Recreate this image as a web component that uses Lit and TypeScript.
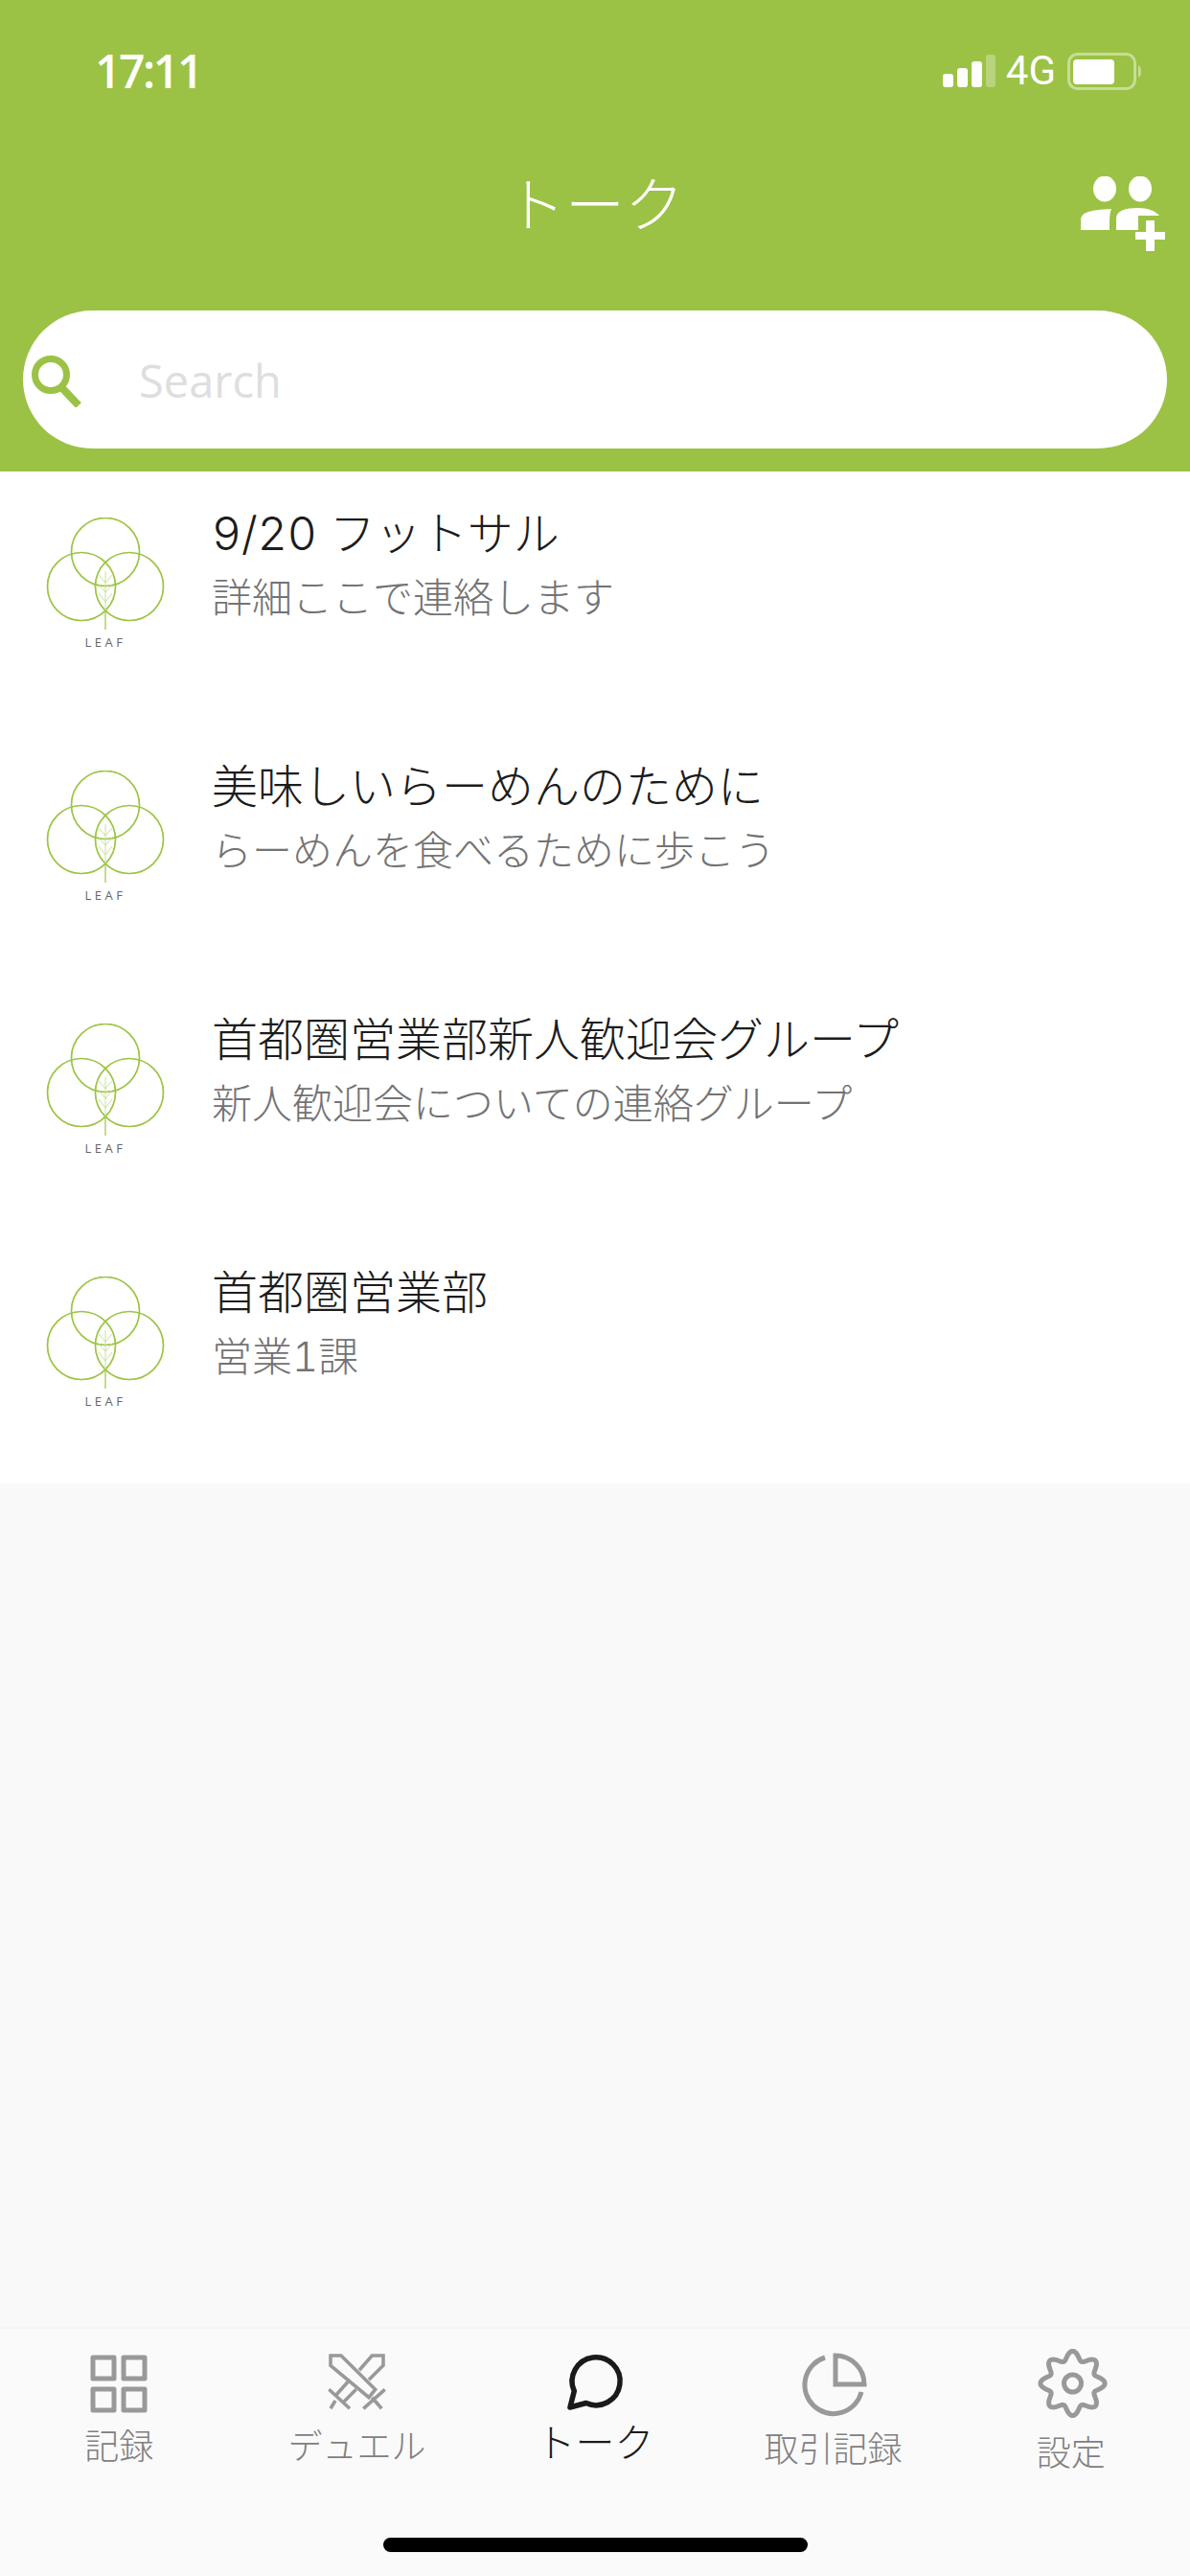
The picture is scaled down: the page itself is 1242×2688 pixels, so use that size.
import { LitElement, html, css, svg } from "lit";
import { customElement } from "lit/decorators.js";

const rows = [
  { title: "9/20 フットサル", sub: "詳細ここで連絡します" },
  { title: "美味しいらーめんのために", sub: "らーめんを食べるために歩こう" },
  { title: "首都圏営業部新人歓迎会グループ", sub: "新人歓迎会についての連絡グループ" },
  { title: "首都圏営業部", sub: "営業1課" },
];

function gearPath(): string {
  const pts: string[] = [];
  const n = 240;
  for (let i = 0; i <= n; i++) {
    const t = (i / n) * Math.PI * 2;
    const r = 29 + 4.6 * Math.cos(8 * t);
    const x = 36 + r * Math.sin(t);
    const y = 36 - r * Math.cos(t);
    pts.push(`${i ? "L" : "M"}${x.toFixed(2)} ${y.toFixed(2)}`);
  }
  return pts.join("") + "Z";
}

const logo = svg`
  <svg class="logo" viewBox="0 0 130 136" width="130" height="136">
    <g fill="none" stroke="#9cc443" stroke-width="1.7">
      <circle cx="62" cy="36" r="35.5"/>
      <circle cx="37" cy="72" r="35.5"/>
      <circle cx="87" cy="72" r="35.5"/>
      <path d="M62 97V117" stroke-width="1.2"/>
      <path d="M62 56V97M62 68L55 60M62 68L69 60M62 78L54 69M62 78L70 69M62 88L55 79M62 88L69 79" stroke-width="0.9" stroke="#c3dc8e"/>
    </g>
  </svg>`;

@customElement("app-root")
export class AppRoot extends LitElement {
  static styles = css`
    :host { display: block; width: 1242px; height: 2688px; background: #f9f9f9; font-family: Inter, "Noto Sans CJK JP", "Noto Sans", sans-serif; overflow: hidden; }
    .page { height: 2688px; display: flex; flex-direction: column; }
    .head { background: #9bc244; height: 492px; display: flex; flex-direction: column; color: #fff; flex: none; }
    .status { height: 150px; display: flex; justify-content: space-between; align-items: flex-start; padding: 0 48px 0 99px; box-sizing: border-box; }
    .time { font: 600 48px/1 "Open Sans", sans-serif; margin-top: 50px; letter-spacing: -2.4px; }
    .sys { display: flex; align-items: flex-start; margin-top: 55px; }
    .g4 { font: 400 42px/38px Roboto, sans-serif; margin-left: 10px; }
    .battery { margin-left: 12px; }
    .titlebar { height: 174px; display: flex; align-items: flex-start; justify-content: center; position: relative; }
    .title { font-size: 62px; font-weight: 300; line-height: 84px; margin-top: 23px; }
    .add { position: absolute; right: 24px; top: 34px; }
    .search { margin: 0 24px; height: 144px; border-radius: 72px; background: #fff; display: flex; align-items: center; position: relative; }
    .search svg { margin-left: 8px; margin-top: 2px; flex: none; }
    .search span { font: 400 47px/1 "Open Sans", sans-serif; color: #dedede; margin-left: 57px; margin-top: 2px; }
    .list { background: #fff; flex: none; }
    .row { height: 264px; display: flex; box-sizing: border-box; padding-left: 48px; overflow: hidden; }
    .avatar { width: 130px; flex: none; padding-top: 48px; display: flex; flex-direction: column; }
    .logo { display: block; }
    .leaf { font: 400 13px/1 "Open Sans", sans-serif; color: #666; letter-spacing: 3.5px; width: 124px; text-align: center; margin-top: -12px; }
    .txt { margin-left: 43px; font-variant-numeric: tabular-nums; }
    .t { font-size: 48px; line-height: 70px; color: #1c1c1c; font-weight: 300; margin-top: 30px; }
    .s { font-size: 42px; line-height: 62px; color: #737373; font-weight: 300; margin-top: 1px; }
    .fill { flex: 1; }
    .tabbar { background: #fafafa; height: 260px; border-top: 2px solid #f4f4f4; box-sizing: border-box; flex: none; display: flex; flex-direction: column; }
    .tabs { display: grid; grid-template-columns: repeat(5, 1fr); }
    .tab { display: flex; flex-direction: column; align-items: center; color: #808080; font-size: 36px; font-weight: 300; }
    .tab svg { display: block; overflow: visible; }
    .tab span { line-height: 50px; }
    .tab.active { color: #1a1a1a; font-size: 41px; }
    .home { width: 443px; height: 15px; border-radius: 8px; background: #000; margin: auto auto 25px; }
    .i0 { padding-top: 27px; } .i0 span { margin-top: 11px; }
    .i1 { padding-top: 27px; } .i1 span { margin-top: 11px; }
    .i2 { padding-top: 26px; } .i2 span { margin-top: 8px; }
    .i3 { padding-top: 23px; } .i3 span { margin-top: 8px; }
    .i4 { padding-top: 21px; } .i4 span { margin-top: 12px; }
  `;

  private tabIcon(i: number) {
    const G = "#999";
    if (i === 0)
      return svg`<svg width="60" height="60" viewBox="0 0 60 60"><g fill="none" stroke="${G}" stroke-width="5" stroke-linejoin="round"><rect x="3" y="3" width="22" height="22"/><rect x="35" y="3" width="22" height="22"/><rect x="3" y="36" width="22" height="22"/><rect x="35" y="36" width="22" height="22"/></g></svg>`;
    if (i === 1)
      return svg`<svg width="60" height="60" viewBox="0 0 60 60"><g fill="none" stroke="${G}" stroke-width="3.6"><path d="M2 1H13L48.7 36.3L42 44.7L2 11.3Z"/><path d="M36.3 56.3L58.7 36.3M45.3 44.7L55.3 56.3"/><path d="M32 16.3L45.3 1H57V11.3L42 26.3"/><path d="M22 26.3L7 43M28.7 36.3L15.3 49.7M0.3 36.3L22 56.3M7 48L2 56.3"/></g></svg>`;
    if (i === 2)
      return svg`<svg width="62" height="60" viewBox="0 0 62 60"><path d="M9.3 39L5 56L21.7 51.5A25 25 0 1 0 9.3 39Z" fill="none" stroke="#1a1a1a" stroke-width="5.5" stroke-linejoin="round"/></svg>`;
    if (i === 3)
      return svg`<svg width="70" height="70" viewBox="-2 0 70 70"><g fill="none" stroke="${G}" stroke-width="5"><path d="M25 7A30 30 0 1 0 63 43"/><path d="M36 5V35H66A30 30 0 0 0 36 5Z"/></g></svg>`;
    return svg`<svg width="72" height="72" viewBox="-1.5 0 72 72"><path d="${gearPath()}" fill="none" stroke="${G}" stroke-width="5"/><circle cx="36" cy="36" r="9" fill="none" stroke="${G}" stroke-width="5"/></svg>`;
  }

  render() {
    const tabs = ["記録", "デュエル", "トーク", "取引記録", "設定"];
    return html`
      <div class="page">
        <div class="head">
          <div class="status">
            <div class="time">17:11</div>
            <div class="sys">
              <svg width="56" height="36" viewBox="0 0 56 36">
                <rect x="0" y="22" width="11" height="14" rx="3" fill="#fff"/>
                <rect x="15" y="16" width="11" height="20" rx="3" fill="#fff"/>
                <rect x="30" y="9" width="11" height="27" rx="3" fill="#fff"/>
                <rect x="45" y="2" width="10" height="34" rx="3" fill="#fff" opacity=".3"/>
              </svg>
              <div class="g4">4G</div>
              <svg class="battery" width="80" height="40" viewBox="0 0 80 40">
                <rect x="1.5" y="1.5" width="69" height="36" rx="9" fill="none" stroke="#fff" stroke-opacity=".45" stroke-width="3"/>
                <rect x="6" y="7" width="43" height="26" rx="4" fill="#fff"/>
                <path d="M74 13C78 15 78 24 74 26Z" fill="#fff" fill-opacity=".45"/>
              </svg>
            </div>
          </div>
          <div class="titlebar">
            <div class="title">トーク</div>
            <svg class="add" width="90" height="80" viewBox="0 0 90 80">
              <ellipse cx="25" cy="13" rx="12" ry="13.5" fill="#fff"/>
              <ellipse cx="62" cy="13" rx="12" ry="13.5" fill="#fff"/>
              <path d="M0 56V46C0 38 8 35 32 34C30 38 30 45 30 56Z" fill="#fff"/>
              <path d="M37 56V44C37 36 46 33 60 33C70 33 78 36 82 41H60V56Z" fill="#fff"/>
              <rect x="57" y="58" width="31" height="8" fill="#fff"/>
              <rect x="68" y="46" width="9" height="32" fill="#fff"/>
            </svg>
          </div>
          <div class="search">
            <svg width="56" height="56" viewBox="0 0 56 56">
              <circle cx="21" cy="22" r="16.5" fill="none" stroke="#9bc244" stroke-width="7"/>
              <path d="M32 35L50 54" fill="none" stroke="#9bc244" stroke-width="8"/>
            </svg>
            <span>Search</span>
          </div>
        </div>
        <div class="list">
          ${rows.map(
            (r) => html`
              <div class="row">
                <div class="avatar">${logo}<div class="leaf">LEAF</div></div>
                <div class="txt">
                  <div class="t">${r.title}</div>
                  <div class="s">${r.sub}</div>
                </div>
              </div>
            `
          )}
        </div>
        <div class="fill"></div>
        <div class="tabbar">
          <div class="tabs">
            ${tabs.map(
              (t, i) => html`
                <div class="tab i${i} ${i === 2 ? "active" : ""}">
                  ${this.tabIcon(i)}
                  <span>${t}</span>
                </div>
              `
            )}
          </div>
          <div class="home"></div>
        </div>
      </div>
    `;
  }
}
